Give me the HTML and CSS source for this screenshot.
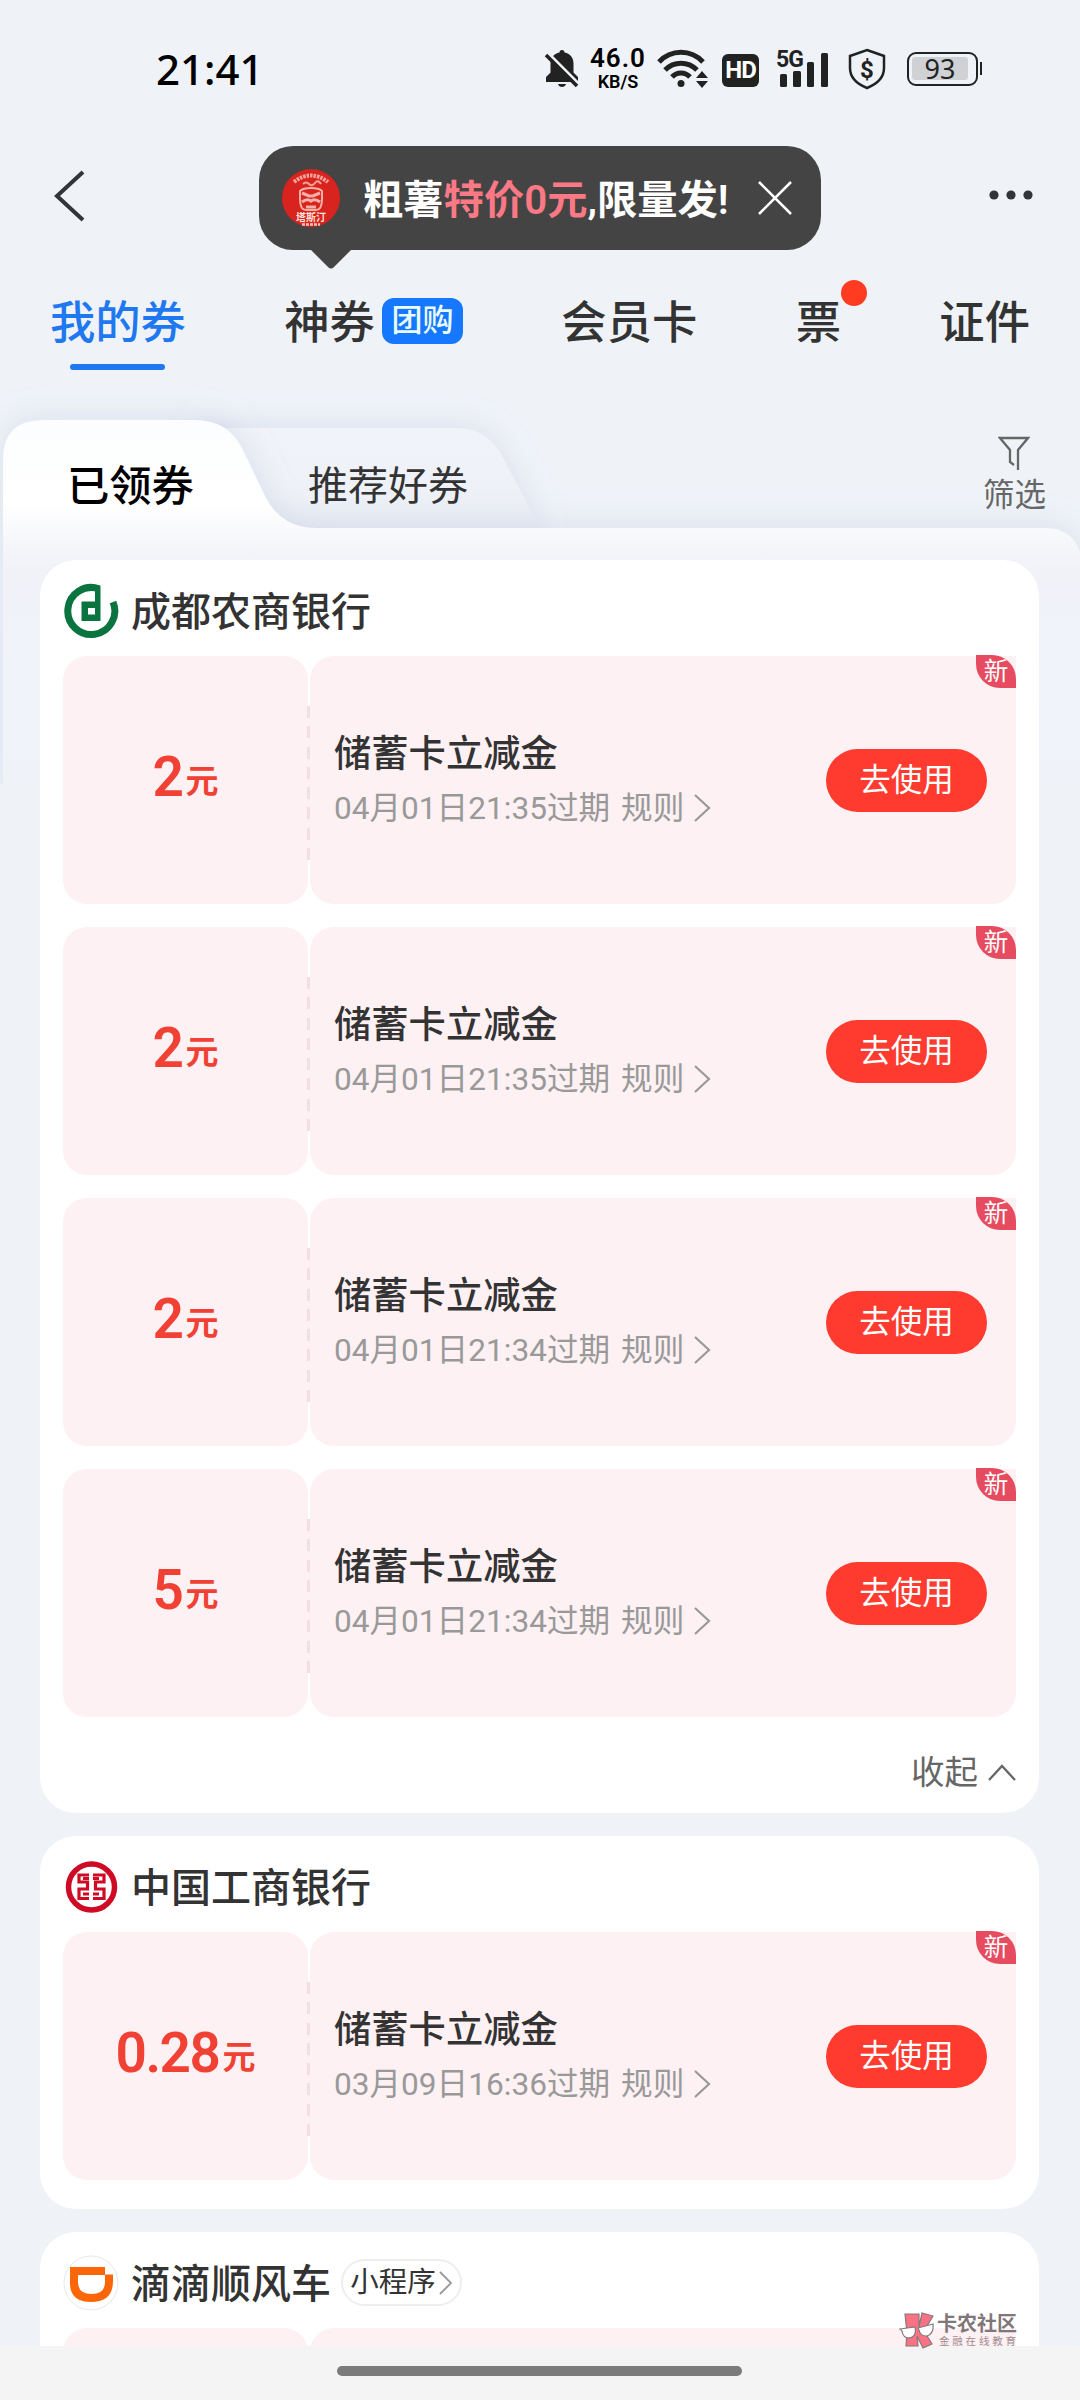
FILE: index.html
```html
<!DOCTYPE html>
<html lang="zh-CN">
<head>
    <meta charset="utf-8">
    <title>我的券</title>
    <link rel="stylesheet" href="styles.css">
</head>
<body>
    <div class="phone">
        <div class="statusbar">
            <span class="clock">21:41</span>
            <div class="status-icons">
                <svg class="bell" width="36" height="42" viewBox="0 0 36 42">
                    <path d="M18 2c1.700 0 2.500 1 2.500 2.500C26.500 5.500 29.500 10 29.500 16v8.500l4.500 4.500v5H2v-5l4.500-4.500V16c0-6 3-10.500 9-11.500C15.500 3 16.300 2 18 2zM14 36h8c-1 4-7 4-8 0z" fill="#222"/>
                    <path d="M5 6l31 31" stroke="#eff3f8" stroke-width="3"/>
                    <path d="M2 7l31 31" stroke="#222" stroke-width="3.500"/>
                </svg>
                <div class="speed"><b>46.0</b><span>KB/S</span></div>
                <svg class="wifi" width="52" height="42" viewBox="0 0 52 42" fill="none" stroke="#222" stroke-width="5">
                    <path d="M2 14c12-13 32-13 44 0M8 22c9-9 23-9 32 0M15 29c5-5.500 13-5.500 18 0"/>
                    <circle cx="24" cy="35.500" r="3.500" fill="#222" stroke="none"/>
                    <path d="M39 30l6-7 6 7zM39 33l6 7 6-7z" fill="#222" stroke="none"/>
                </svg>
                <span class="hd">HD</span>
                <div class="signal">
                    <span class="net">5G</span>
                    <svg width="54" height="40" viewBox="0 0 54 40" fill="#222">
                        <rect x="4" y="25" width="7" height="13" rx="1.500"/>
                        <rect x="17" y="22" width="8" height="16" rx="1.500"/>
                        <rect x="31" y="13" width="7" height="25" rx="1.500"/>
                        <rect x="45" y="4" width="7" height="34" rx="1.500"/>
                    </svg>
                </div>
                <svg class="shield" width="40" height="42" viewBox="0 0 40 42">
                    <path d="M20 2l17 6v12c0 10-7 16-17 20C10 36 3 30 3 20V8z" fill="none" stroke="#222" stroke-width="2.500"/>
                    <text x="20" y="30" text-anchor="middle" class="dollar">$</text>
                </svg>
                <div class="battery"><span>93</span></div>
            </div>
        </div>

        <div class="navbar">
            <svg class="back" width="34" height="52" viewBox="0 0 34 52">
                <path d="M31 2L5 26l26 24" fill="none" stroke="#333438" stroke-width="4"/>
            </svg>
            <div class="tip">
                <svg class="tip-logo" width="60" height="60" viewBox="0 0 60 60">
                    <circle cx="30" cy="30" r="29" fill="#d9231f"/>
                    <path d="M13 14Q30 1 47 14" fill="none" stroke="#f6a49c" stroke-width="4" stroke-dasharray="2.500 1"/>
                    <path d="M22 16q3-3 6 0t6-1 6 1" fill="none" stroke="#f6a49c" stroke-width="2"/>
                    <path d="M19 23q3-3 11-3t11 3v8q0 11-6 11H25q-6 0-6-11z" fill="none" stroke="#f6b0a6" stroke-width="2"/>
                    <path d="M21 25l7 3h4l7-3M21 34q5-4 9-1q4-3 9 1M25 39h10" fill="none" stroke="#f6b0a6" stroke-width="3"/>
                    <text x="30" y="53" text-anchor="middle" class="brand">塔斯汀</text>
                    <path d="M21 56.500h18" stroke="#f6c0b8" stroke-width="2.500" stroke-dasharray="3 1"/>
                </svg>
                <span class="tip-text">粗薯<em>特价0元</em>,限量发!</span>
                <svg class="tip-close" width="34" height="34" viewBox="0 0 34 34">
                    <path d="M1 1l32 32M33 1L1 33" stroke="#fff" stroke-width="2.500"/>
                </svg>
                <svg class="tip-arrow" width="42" height="20" viewBox="0 0 42 20">
                    <path d="M0 0h42L24 18q-3 3-6 0z" fill="#444"/>
                </svg>
            </div>
            <svg class="more" width="46" height="12" viewBox="0 0 46 12" fill="#333438">
                <circle cx="6" cy="6" r="4.600"/><circle cx="23" cy="6" r="4.600"/><circle cx="40" cy="6" r="4.600"/>
            </svg>
        </div>

        <div class="tabs">
            <span class="tab active">我的券</span>
            <span class="tab">神券<i class="tag">团购</i></span>
            <span class="tab">会员卡</span>
            <span class="tab ticket">票<i class="dot"></i></span>
            <span class="tab">证件</span>
        </div>

        <div class="panel">
            <!-- folder shaped background of the two sub tabs -->
            <svg class="folder" width="1080" height="424" viewBox="0 0 1080 424">
                <defs>
                    <linearGradient id="front" x1="0" y1="0" x2="0" y2="1">
                        <stop offset="0" stop-color="#fcfdfe"/>
                        <stop offset=".22" stop-color="#ffffff"/>
                        <stop offset=".33" stop-color="#f5f6fa"/>
                        <stop offset=".4" stop-color="#f0f2f8"/>
                        <stop offset="1" stop-color="#eff3f8"/>
                    </linearGradient>
                    <linearGradient id="rear" x1="0" y1="0" x2="0" y2="1">
                        <stop offset="0" stop-color="#f0f3f8"/>
                        <stop offset=".6" stop-color="#eef1f7"/>
                        <stop offset="1" stop-color="#e8ebf3"/>
                    </linearGradient>
                    <filter id="soft" x="-10%" y="-30%" width="120%" height="160%">
                        <feDropShadow dx="0" dy="-3" stdDeviation="15" flood-color="#aab4d6" flood-opacity=".3"/>
                    </filter>
                </defs>
                <path filter="url(#soft)" fill="url(#rear)" d="M200 68H458Q484 68 500 92L543 174H200z"/>
                <path filter="url(#soft)" fill="url(#front)" d="M3 440V100Q3 60 43 60H195Q226 60 241 86L266 138Q282 168 316 168H1045Q1072 168 1080 192V440z"/>
            </svg>
            <div class="subtabs">
                <span class="subtab on">已领券</span>
                <span class="subtab">推荐好券</span>
                <div class="filter">
                    <svg width="32" height="36" viewBox="0 0 32 36" fill="none" stroke="#666" stroke-width="2.300">
                        <path d="M20 35V15L30 3H2l10 12v12l4 3"/>
                    </svg>
                    <span>筛选</span>
                </div>
            </div>

            <div class="list">
                <div class="card">
                    <div class="bank">
                        <svg class="logo" width="56" height="56" viewBox="0 0 56 56">
                            <path d="M36 5.800A23.500 23.500 0 1 0 50 19" fill="none" stroke="#0a7440" stroke-width="7"/>
                            <path d="M28 1.500q5 0 9.500 1.500v35h-19V18.500h13.500V8h-6zM25 25v6.500h7V25z" fill="#0a7440" fill-rule="evenodd"/>
                        </svg>
                        <span>成都农商银行</span>
                    </div>
                    <div class="coupon">
                        <div class="amount"><b>2</b><span>元</span></div>
                        <div class="detail">
                            <div class="info">
                                <div class="name">储蓄卡立减金</div>
                                <div class="expire">04月01日21:35过期<span>规则</span><svg width="18" height="28" viewBox="0 0 18 28"><path d="M1 1l14 13L1 27"/></svg></div>
                            </div>
                            <span class="use">去使用</span>
                            <i class="new">新</i>
                        </div>
                    </div>
                    <div class="coupon">
                        <div class="amount"><b>2</b><span>元</span></div>
                        <div class="detail">
                            <div class="info">
                                <div class="name">储蓄卡立减金</div>
                                <div class="expire">04月01日21:35过期<span>规则</span><svg width="18" height="28" viewBox="0 0 18 28"><path d="M1 1l14 13L1 27"/></svg></div>
                            </div>
                            <span class="use">去使用</span>
                            <i class="new">新</i>
                        </div>
                    </div>
                    <div class="coupon">
                        <div class="amount"><b>2</b><span>元</span></div>
                        <div class="detail">
                            <div class="info">
                                <div class="name">储蓄卡立减金</div>
                                <div class="expire">04月01日21:34过期<span>规则</span><svg width="18" height="28" viewBox="0 0 18 28"><path d="M1 1l14 13L1 27"/></svg></div>
                            </div>
                            <span class="use">去使用</span>
                            <i class="new">新</i>
                        </div>
                    </div>
                    <div class="coupon">
                        <div class="amount"><b>5</b><span>元</span></div>
                        <div class="detail">
                            <div class="info">
                                <div class="name">储蓄卡立减金</div>
                                <div class="expire">04月01日21:34过期<span>规则</span><svg width="18" height="28" viewBox="0 0 18 28"><path d="M1 1l14 13L1 27"/></svg></div>
                            </div>
                            <span class="use">去使用</span>
                            <i class="new">新</i>
                        </div>
                    </div>
                    <div class="fold">收起
                        <svg width="28" height="17" viewBox="0 0 28 17"><path d="M1 16L14 2l13 14" fill="none" stroke="#666" stroke-width="2.300"/></svg>
                    </div>
                </div>

                <div class="card">
                    <div class="bank">
                        <svg class="logo" width="56" height="56" viewBox="0 0 56 56" fill="none" stroke="#cf0a24">
                            <circle cx="28.500" cy="28" r="23" stroke-width="5.500"/>
                            <path d="M26 16H16v7h8.500v7H16v9.500h10M30 16h11v7h-8.500v7H41v9.500H30M20 19.500h6M30 19.500h6M20 35h6M30 35h6" stroke-width="3.200"/>
                        </svg>
                        <span>中国工商银行</span>
                    </div>
                    <div class="coupon">
                        <div class="amount"><b>0.28</b><span>元</span></div>
                        <div class="detail">
                            <div class="info">
                                <div class="name">储蓄卡立减金</div>
                                <div class="expire">03月09日16:36过期<span>规则</span><svg width="18" height="28" viewBox="0 0 18 28"><path d="M1 1l14 13L1 27"/></svg></div>
                            </div>
                            <span class="use">去使用</span>
                            <i class="new">新</i>
                        </div>
                    </div>
                </div>

                <div class="card">
                    <div class="bank">
                        <svg class="logo" width="56" height="56" viewBox="0 0 56 56">
                            <circle cx="28" cy="28" r="27" fill="#fff" stroke="#e8e8e8"/>
                            <path d="M7 12h35v7.500h8V26q0 21-22 21T7 26zM15 20v7q0 12 13.500 12T42 27v-7z" fill="#fb6608" fill-rule="evenodd"/>
                        </svg>
                        <span>滴滴顺风车</span>
                        <span class="mini">小程序<svg width="14" height="26" viewBox="0 0 14 26"><path d="M1 2l11 11L1 24" fill="none" stroke="#999" stroke-width="1.800"/></svg></span>
                    </div>
                    <div class="coupon">
                        <div class="amount"></div>
                        <div class="detail"></div>
                    </div>
                </div>
            </div>
        </div>

        <div class="homebar"><span></span></div>

        <div class="watermark">
            <svg width="36" height="38" viewBox="0 0 36 38" fill="#fa7283" stroke="#86797b" stroke-width="1.200">
                <path d="M6 3h14v13l3-14 11 3-9 15 8 13-9 4-6-12 1 10H7l1-13z"/>
                <path d="M1 18l15-2q2 10-6 11-6 0-7-7zM19 17l15-4q1 10-6 12-7 0-8-6z" fill="#fff"/>
            </svg>
            <div class="wm-text"><b>卡农社区</b><span>金融在线教育</span></div>
        </div>
    </div>
</body>
</html>
```
FILE: styles.css
```css
* { box-sizing: border-box; }

body {
    margin: 0;
    background: #eff3f8;
    font-family: Roboto, "Noto Sans CJK SC", sans-serif;
    color: #333;
}

i, em { font-style: normal; }
svg { display: block; flex: none; }

.phone {
    position: relative;
    width: 1080px;
    height: 2400px;
    overflow: hidden;
}

/* status bar */
.statusbar {
    height: 138px;
    padding: 0 98px 0 156px;
    display: flex;
    justify-content: space-between;
    align-items: center;
}
.clock {
    margin-top: -2px;
    font: 500 42px "Noto Sans", sans-serif;
    color: #000;
}
.status-icons {
    display: flex;
    align-items: center;
}
.speed {
    width: 58px;
    margin: -2px 2px 0 9px;
    display: flex;
    flex-direction: column;
    align-items: center;
    color: #000;
    font-family: Roboto, sans-serif;
}
.speed b {
    font-weight: 600;
    font-size: 26px;
    line-height: 27px;
    letter-spacing: 1px;
}
.speed span {
    font-weight: 600;
    font-size: 18px;
    line-height: 19px;
}
.wifi { margin-left: 8px; }
.hd {
    width: 37px;
    height: 33px;
    margin: 3px 0 0 13px;
    border-radius: 6px;
    background: #222;
    color: #fff;
    font: 700 24px/33px Roboto, sans-serif;
    letter-spacing: -1px;
    text-align: center;
}
.signal {
    position: relative;
    margin-left: 17px;
}
.net {
    position: absolute;
    left: 0;
    top: 0;
    font: 700 23px/22px Roboto, sans-serif;
    letter-spacing: -1px;
    color: #222;
}
.shield { margin-left: 17px; }
.dollar {
    font: 700 24px Roboto, sans-serif;
    fill: #222;
}
.battery {
    position: relative;
    width: 71px;
    height: 34px;
    margin: 0 4px 0 20px;
    padding: 3px;
    border: 2.5px solid #222;
    border-radius: 9px;
}
.battery span {
    display: block;
    width: 56px;
    height: 23px;
    border-radius: 3px;
    background: #cfd1d5;
    color: #222;
    font: 400 27px/24px "Noto Sans", sans-serif;
    text-align: center;
}
.battery::after {
    content: "";
    position: absolute;
    right: -6px;
    top: 8px;
    width: 2.5px;
    height: 13px;
    background: #222;
}

/* navigation */
.navbar {
    height: 132px;
    padding: 8px 46px 0 52px;
    display: flex;
    align-items: flex-start;
}
.back { margin-top: 24px; }
.tip {
    position: relative;
    width: 562px;
    height: 104px;
    margin-left: 173px;
    padding: 0 29px 0 22px;
    border-radius: 34px;
    background: #444;
    display: flex;
    align-items: center;
}
.brand {
    font-size: 10px;
    font-weight: 700;
    fill: #ffe5de;
}
.tip-text {
    margin: -4px 0 0 22px;
    color: #fff;
    font-size: 40.3px;
    font-weight: 600;
    white-space: nowrap;
}
.tip-text em { color: #fb7985; }
.tip-close { margin-left: auto; }
.tip-arrow {
    position: absolute;
    left: 51px;
    top: 103px;
}
.more { margin: 43px 0 0 auto; }

.tabs {
    height: 90px;
    padding: 22px 50px 0;
    display: flex;
    justify-content: space-between;
    font-size: 45.3px;
    font-weight: 500;
    line-height: 64px;
}
.tab {
    position: relative;
    display: flex;
    align-items: center;
    height: 64px;
}
.tab.active { color: #1f78f0; }
.tab.active::after {
    content: "";
    position: absolute;
    left: 20px;
    bottom: -14px;
    width: 95px;
    height: 6px;
    border-radius: 3px;
    background: #1f78f0;
}
.tag {
    width: 81px;
    height: 46px;
    margin: -6px 0 0 7px;
    border-radius: 12px;
    background: #1677ff;
    color: #e8fbff;
    font-size: 31px;
    line-height: 45px;
    text-align: center;
}
.dot {
    position: absolute;
    left: 45px;
    top: -12px;
    width: 26px;
    height: 26px;
    border-radius: 50%;
    background: #ff3b21;
}

/* sub tabs */
.panel {
    position: relative;
    height: 1986px;
}
.folder {
    position: absolute;
    left: 0;
    top: 0;
}
.subtabs {
    position: relative;
    height: 200px;
    padding: 62px 34px 0 67px;
    display: flex;
}
.subtab {
    margin-right: 114px;
    font-size: 40px;
    line-height: 129px;
}
.subtab.on {
    color: #000;
    font-size: 42.3px;
    font-weight: 500;
}
.filter {
    margin: 13px 0 0 auto;
    display: flex;
    flex-direction: column;
    align-items: center;
    color: #666;
    font-size: 31.5px;
    line-height: 50px;
}

/* coupons */
.list {
    position: relative;
    padding: 0 41px 0 40px;
    display: flex;
    flex-direction: column;
    gap: 23px;
}
.card {
    padding: 0 23px 29px;
    border-radius: 36px;
    background: #fff;
}
.bank {
    height: 96px;
    padding-top: 6px;
    display: flex;
    align-items: center;
    font-size: 40px;
    font-weight: 500;
}
.bank > span { margin-top: -4px; }
.logo { margin-right: 12px; }
.bank .mini {
    width: 121px;
    height: 47px;
    margin: -1px 0 0 10px;
    border: 2px solid #eee;
    border-radius: 24px;
    display: flex;
    align-items: center;
    justify-content: center;
    gap: 3px;
    font-size: 28.5px;
    font-weight: 400;
    line-height: 40px;
}
.coupon {
    position: relative;
    height: 248px;
    display: flex;
    gap: 2px;
}
.coupon + .coupon { margin-top: 23px; }
.coupon::after {
    content: "";
    position: absolute;
    left: 244px;
    top: 50px;
    width: 3px;
    height: 154px;
    background: repeating-linear-gradient(#f3dee1 0 12px, #fdf1f3 12px 20.3px);
}
.amount, .detail {
    border-radius: 24px;
    background: #fef1f3;
}
.amount {
    width: 245px;
    display: flex;
    align-items: baseline;
    justify-content: center;
    color: #f04134;
    line-height: 242px;
}
.amount b {
    margin-right: 3px;
    font-size: 55px;
    font-weight: 600;
    letter-spacing: -1.5px;
}
.amount span {
    position: relative;
    top: -3px;
    font-size: 33px;
    font-weight: 600;
}
.detail {
    position: relative;
    flex: 1;
    padding: 0 29px 0 24px;
    border-top-right-radius: 0;
    display: flex;
    align-items: center;
    justify-content: space-between;
}
.info { padding-top: 2px; }
.name {
    font-size: 37.3px;
    font-weight: 500;
    line-height: 56px;
}
.expire {
    display: flex;
    align-items: center;
    color: #999;
    font-size: 31.6px;
    line-height: 54px;
}
.expire span { margin-left: 11px; }
.expire svg { margin: -2px 0 0 10px; }
.expire path {
    fill: none;
    stroke: #999;
    stroke-width: 2.2;
}
.use {
    width: 161px;
    height: 63px;
    border-radius: 32px;
    background: #ff3b30;
    color: #fff;
    font-size: 31.5px;
    line-height: 64px;
    text-align: center;
}
.new {
    position: absolute;
    right: 0;
    top: -1px;
    width: 40px;
    height: 33px;
    border-radius: 0 24px 0 24px;
    background: #e64b60;
    color: #fff;
    font-size: 24.5px;
    line-height: 34px;
    text-align: center;
}
.fold {
    height: 67px;
    padding-top: 44px;
    display: flex;
    align-items: center;
    justify-content: flex-end;
    gap: 10px;
    color: #666;
    font-size: 33.5px;
    line-height: 23px;
}

.homebar {
    position: absolute;
    left: 0;
    bottom: 0;
    width: 100%;
    height: 54px;
    padding: 20px 337px 0;
    background: #f4f4f4;
}
.homebar span {
    display: block;
    width: 405px;
    height: 10px;
    border-radius: 5px;
    background: #7b7b7b;
}

.watermark {
    position: absolute;
    left: 899px;
    top: 2311px;
    display: flex;
    gap: 2px;
}
.wm-text {
    display: flex;
    flex-direction: column;
    color: #7f7779;
}
.wm-text b {
    font-size: 20px;
    line-height: 26px;
}
.wm-text span {
    margin-left: 2px;
    font-size: 10.5px;
    line-height: 10px;
    letter-spacing: 2.8px;
    color: #a08b90;
}
```
